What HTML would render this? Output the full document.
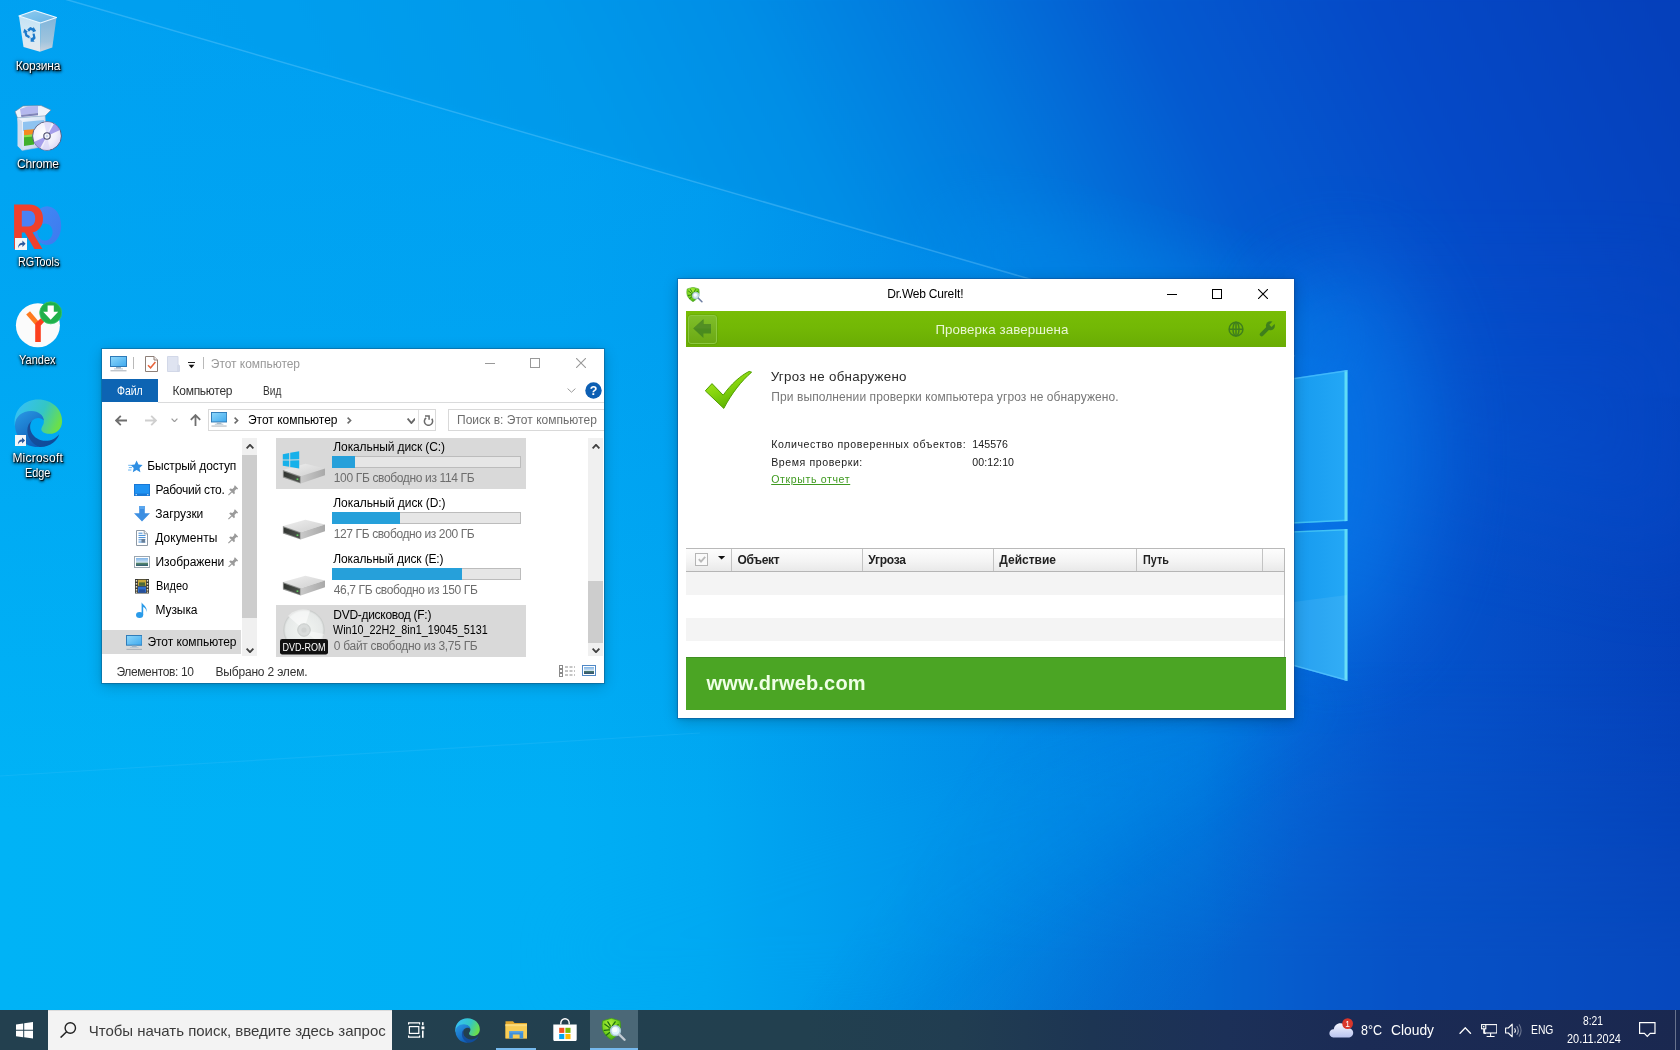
<!DOCTYPE html>
<html lang="ru"><head><meta charset="utf-8"><title>Desktop</title>
<style>
*{margin:0;padding:0;box-sizing:border-box}
html,body{width:1680px;height:1050px;overflow:hidden;background:#0a6bd2}
body{font-family:"Liberation Sans",sans-serif;position:relative;font-size:12px}
#root{position:absolute;left:0;top:0;width:1680px;height:1050px;overflow:hidden;opacity:.999}
.wall{position:absolute;left:0;top:0}
.a{position:absolute}
.t{position:absolute;white-space:nowrap}
svg{display:block}
.ds{text-shadow:1px 1px 1px rgba(0,0,0,.95),0 1px 3px rgba(0,0,0,.9),0 0 4px rgba(0,0,0,.65),1px 2px 3px rgba(0,0,0,.6)}
</style></head>
<body>
<div id="root">

<svg class="wall" width="1680" height="1050" viewBox="0 0 1680 1050">
<defs>
<linearGradient id="bg" x1="0" y1="0" x2="1680" y2="0" gradientUnits="userSpaceOnUse">
<stop offset="0" stop-color="#00b3f6"/><stop offset="0.333" stop-color="#00aff5"/><stop offset="0.42" stop-color="#00a9f2"/><stop offset="0.536" stop-color="#0097eb"/>
<stop offset="0.714" stop-color="#007de1"/><stop offset="0.774" stop-color="#0566d7"/><stop offset="0.833" stop-color="#0555cd"/>
<stop offset="1" stop-color="#0540b9"/>
</linearGradient>
<linearGradient id="vert" x1="0" y1="0" x2="0" y2="1050" gradientUnits="userSpaceOnUse">
<stop offset="0" stop-color="#0050dc" stop-opacity="0.18"/><stop offset="0.3" stop-color="#0050dc" stop-opacity="0.13"/>
<stop offset="0.78" stop-color="#0050dc" stop-opacity="0"/>
</linearGradient>
<linearGradient id="up" x1="0" y1="0" x2="1350" y2="-654" gradientUnits="userSpaceOnUse">
<stop offset="0" stop-color="#00a0f0"/><stop offset="0.165" stop-color="#009eee"/><stop offset="0.321" stop-color="#0099ea"/>
<stop offset="0.441" stop-color="#008ee6"/><stop offset="0.561" stop-color="#0278dd"/><stop offset="0.681" stop-color="#045ad0"/>
<stop offset="0.825" stop-color="#0549c7"/><stop offset="0.993" stop-color="#0540bb"/>
</linearGradient>
<linearGradient id="pane" x1="0" y1="0" x2="1" y2="0">
<stop offset="0" stop-color="#0a86e6"/><stop offset="0.7" stop-color="#189cf0"/><stop offset="1" stop-color="#24a8f6"/>
</linearGradient>
<linearGradient id="tilt" x1="800" y1="1000" x2="1071.6" y2="1187.4" gradientUnits="userSpaceOnUse">
<stop offset="0" stop-color="#0850c2" stop-opacity="0"/><stop offset="0.5" stop-color="#0850c2" stop-opacity="0.2"/>
<stop offset="0.8" stop-color="#0850c2" stop-opacity="0.4"/><stop offset="1.2" stop-color="#0850c2" stop-opacity="0.5"/>
</linearGradient>
<linearGradient id="vfade" x1="0" y1="660" x2="0" y2="960" gradientUnits="userSpaceOnUse">
<stop offset="0" stop-color="#000"/><stop offset="1" stop-color="#fff"/>
</linearGradient>
<mask id="vmask" maskUnits="userSpaceOnUse" x="0" y="640" width="1680" height="410"><rect x="0" y="640" width="1680" height="410" fill="url(#vfade)"/></mask>
<filter id="b3" color-interpolation-filters="sRGB" x="-5%" y="-5%" width="110%" height="110%"><feGaussianBlur stdDeviation="2.5"/></filter>
<filter id="b30" color-interpolation-filters="sRGB" x="-30%" y="-30%" width="160%" height="160%"><feGaussianBlur stdDeviation="30"/></filter>
<filter id="b60" color-interpolation-filters="sRGB" x="-50%" y="-50%" width="200%" height="200%"><feGaussianBlur stdDeviation="45"/></filter>
</defs>
<rect width="1680" height="1050" fill="url(#bg)"/>
<rect width="1680" height="1050" fill="url(#vert)"/>
<!-- upper region above the top ray -->
<polygon points="61,-4 1295,356 1700,400 1700,-4" fill="url(#up)" filter="url(#b3)"/>
<!-- soften lower boundary of upper region on the right of the logo -->
<polygon points="1300,300 1700,300 1700,560 1300,470" fill="url(#up)" filter="url(#b60)" opacity="0.8"/>
<!-- bright beam under the window -->
<rect x="0" y="640" width="1680" height="410" fill="url(#tilt)" mask="url(#vmask)"/>
<polygon points="1294,700 1350,690 900,980 560,1000 560,910" fill="#00a8f4" opacity="0.10" filter="url(#b30)"/>
<!-- glow around logo -->
<ellipse cx="1340" cy="455" rx="85" ry="190" fill="#0a84f4" opacity="0.55" filter="url(#b60)"/>
<ellipse cx="1130" cy="290" rx="210" ry="55" transform="rotate(16 1130 290)" fill="#0092f0" opacity="0.30" filter="url(#b30)"/>
<!-- top ray line -->
<line x1="61" y1="-2" x2="1295" y2="356" stroke="#8ad8ff" stroke-opacity="0.30" stroke-width="1.5"/>
<!-- faint mid ray -->
<line x1="0" y1="776" x2="700" y2="733" stroke="#5fd0ff" stroke-opacity="0.16" stroke-width="1.2"/>
<!-- logo panes -->
<polygon points="1200,392 1347,370 1347,521 1200,528" fill="url(#pane)"/>
<polygon points="1200,535 1347,529 1347,681 1200,640" fill="url(#pane)"/>
<polygon points="1344.5,370.4 1347.6,370 1347.6,521 1344.5,521.2" fill="#5fdcf8"/>
<polygon points="1344.5,529.2 1347.6,529 1347.6,681 1344.5,680.2" fill="#5fdcf8"/>
<polygon points="1200,392 1347,370 1347,371.6 1200,393.6" fill="#4fc0ff" opacity="0.7"/>
<polygon points="1200,638.4 1347,679.4 1347,681 1200,640" fill="#4fc0ff" opacity="0.7"/>
<polygon points="1200,526.4 1347,519.6 1347,521 1200,528" fill="#5fdcf8" opacity="0.55"/>
<polygon points="1200,535 1347,529 1347,530.4 1200,536.4" fill="#5fdcf8" opacity="0.55"/>
<polygon points="1200,614 1347,595 1347,681 1200,640" fill="#fff" opacity="0.07"/>
</svg>
<svg class="a" style="left:18px;top:9.5px;" width="39" height="43" viewBox="0 0 39 43"><defs><linearGradient id="g1" x1="0" y1="0" x2="0" y2="1"><stop offset="0" stop-color="#cfe6f4"/><stop offset="0.6" stop-color="#e4eef5"/><stop offset="1" stop-color="#f2ecec"/></linearGradient>
<linearGradient id="g2" x1="0" y1="0" x2="0" y2="1"><stop offset="0" stop-color="#86b6da"/><stop offset="0.7" stop-color="#a9c6dc"/><stop offset="1" stop-color="#d4d6de"/></linearGradient>
<linearGradient id="g3" x1="0" y1="0" x2="1" y2="1"><stop offset="0" stop-color="#9fd0ee"/><stop offset="1" stop-color="#6fb4e4"/></linearGradient></defs>
<polygon points="0.9,6 16.7,0.6 38.5,7.6 22.5,12.9" fill="url(#g3)" opacity="0.9"/>
<polygon points="0.9,6 22.5,12.9 22,41.7 5.5,36.9" fill="url(#g1)" opacity="0.95"/>
<polygon points="22.5,12.9 38.5,7.6 34.3,37.4 22,41.7" fill="url(#g2)" opacity="0.95"/>
<path d="M0.9 6L16.7 0.6L38.5 7.6L22.5 12.9Z" fill="none" stroke="#eef8ff" stroke-width="1.1" stroke-linejoin="round"/>
<g fill="#1c7acb" transform="translate(12.4,23.8) skewY(14) scale(0.78,0.9)"><g transform="rotate(10)"><path d="M-4.6,-3.2 L-1.6,-7.4 L2.4,-7.4 L2.4,-9.2 L6.4,-5.8 L2.4,-2.4 L2.4,-4.2 L-0.4,-4.2 L-2.2,-1.6 Z"/></g><g transform="rotate(130)"><path d="M-4.6,-3.2 L-1.6,-7.4 L2.4,-7.4 L2.4,-9.2 L6.4,-5.8 L2.4,-2.4 L2.4,-4.2 L-0.4,-4.2 L-2.2,-1.6 Z"/></g><g transform="rotate(250)"><path d="M-4.6,-3.2 L-1.6,-7.4 L2.4,-7.4 L2.4,-9.2 L6.4,-5.8 L2.4,-2.4 L2.4,-4.2 L-0.4,-4.2 L-2.2,-1.6 Z"/></g></g></svg>
<span class="t ds" style="left:15.80px;top:58px;font-size:12px;line-height:16px;color:#fff;letter-spacing:-0.198px;">Корзина</span>
<svg class="a" style="left:14px;top:105px;" width="48" height="47" viewBox="0 0 48 47"><defs><linearGradient id="g4" x1="0" y1="0" x2="1" y2="1"><stop offset="0" stop-color="#f4f8fd"/><stop offset="1" stop-color="#b9cfe8"/></linearGradient>
<radialGradient id="g5" cx="0.4" cy="0.4" r="0.7"><stop offset="0" stop-color="#ffffff"/><stop offset="0.6" stop-color="#f0eefb"/><stop offset="1" stop-color="#d6d2f2"/></radialGradient></defs>
<path d="M1 6.5L9 1L27 0.5L37 5L31 11L3.5 13Z" fill="#eef3fb" stroke="#6f7f9a" stroke-width="0.6"/>
<path d="M6 4L14 1.2L24 1L24 8L7 10Z" fill="#b4b8ee"/><path d="M7 10L24 8V10.2L7.4 12Z" fill="#7f84b8"/>
<path d="M3.5 13L31 11L33 41L8 45.5Z" fill="url(#g4)" stroke="#a9bcd6" stroke-width="0.6"/>
<path d="M3.5 13L8 16V45.5L3.5 41Z" fill="#cfdcee"/>
<path d="M9 17L30 15V24L9 26Z" fill="#8fc3f0"/>
<path d="M10 25L20 24.2V29.4L10 30.2Z" fill="#f58a1f"/><path d="M10 30.2L20 29.4V39.6L10 41Z" fill="#3fb02a"/><path d="M10 30.2L20 29.4V31.4L10 32.2Z" fill="#8fe04a"/>
<circle cx="33" cy="31" r="14.4" fill="url(#g5)" stroke="#3b3f66" stroke-opacity="0.75" stroke-width="1"/>
<path d="M33 31L40.2 18.53A14.4 14.4 0 0 1 46.05 24.91Z" fill="#968ee6" opacity="0.85"/><path d="M33 31L25.8 43.47A14.4 14.4 0 0 1 19.95 37.09Z" fill="#968ee6" opacity="0.85"/>
<path d="M33 31L30 17A14.4 14.4 0 0 1 38 17.6Z" fill="#d9d4f6" opacity="0.7"/><path d="M33 31L36 45A14.4 14.4 0 0 1 28 44.4Z" fill="#d9d4f6" opacity="0.7"/>
<circle cx="33" cy="31" r="3.2" fill="#f4f4fb" stroke="#4a4a6a" stroke-width="1.1"/><circle cx="33" cy="31" r="1.2" fill="#c9d6f0"/></svg>
<span class="t ds" style="left:17.00px;top:156px;font-size:12px;line-height:16px;color:#fff;letter-spacing:-0.138px;">Chrome</span>
<svg class="a" style="left:14px;top:204px;" width="48" height="46" viewBox="0 0 48 46"><defs><linearGradient id="g6" x1="0" y1="0" x2="1" y2="1"><stop offset="0" stop-color="#4a86f6"/><stop offset="1" stop-color="#4674ee"/></linearGradient></defs>
<path fill-rule="evenodd" d="M33 2.2C41 2.2 47.2 10.6 47.2 21.6C47.2 32.6 41 41 33 41C25 41 19 32.6 19 21.6C19 10.6 25 2.2 33 2.2ZM31 19.6C26.8 19.6 23.4 23.4 23.4 28C23.4 32.8 26.8 36.6 31 36.6C35.2 36.6 38.6 32.8 38.6 28C38.6 23.4 35.2 19.6 31 19.6Z" fill="url(#g6)" opacity="0.88"/>
<rect x="6" y="5" width="17" height="22" fill="#4a82f5"/>
<path fill-rule="evenodd" d="M0.1 0.4H15C24 0.4 29 6 29 14.5C29 22 25 27 18.6 28.4L28.5 45.1H20.4L10.8 28.6H7.8V45.1H0.1ZM7.8 6.8V22.4H14.5C19 22.4 21.2 19.4 21.2 14.6C21.2 9.8 19 6.8 14.5 6.8Z" fill="#f0402c"/></svg>
<svg class="a" style="left:14.5px;top:237.8px;" width="12" height="12" viewBox="0 0 12 12"><rect x="0" y="0" width="12" height="12" fill="#f4f6f8"/>
<path d="M3 10.2C3 6.6 5 4.8 7.4 4.8V2.6L10.6 5.8L7.4 9V6.8C5.6 6.8 4.2 7.8 3 10.2Z" fill="#2b5a9e"/></svg>
<span class="t ds" style="left:17.60px;top:254px;font-size:12px;line-height:16px;color:#fff;transform:scaleX(0.8997);transform-origin:0 0;">RGTools</span>
<svg class="a" style="left:15px;top:300.5px;" width="47" height="47" viewBox="0 0 47 47"><circle cx="22.9" cy="24.3" r="22" fill="#fbfbfb"/>
<path d="M20.4 24L11.2 13.4L15 10.2L23.4 20.2Z" fill="#ff7a1f"/>
<path d="M20.2 22.6L32 11.4L35 14.6L25.8 24.6V41H20.2Z" fill="#fc3f1d"/>
<circle cx="35.7" cy="11.8" r="11" fill="#1fb04a"/><circle cx="35.7" cy="11.8" r="11" fill="none" stroke="#38c768" stroke-width="0.8"/>
<path d="M32.6 4.6H38.8V10.8H43.2L35.7 18.8L28.2 10.8H32.6Z" fill="#fff"/></svg>
<span class="t ds" style="left:19.20px;top:352px;font-size:12px;line-height:16px;color:#fff;transform:scaleX(0.9172);transform-origin:0 0;">Yandex</span>
<svg class="a" style="left:14px;top:398.8px;" width="48.5" height="48.5" viewBox="0 0 48 48"><defs>
<linearGradient id="g7" x1="0.1" y1="0.2" x2="1" y2="0.5"><stop offset="0" stop-color="#35c1f1"/><stop offset="0.55" stop-color="#34c6c4"/><stop offset="1" stop-color="#6bdf4a"/></linearGradient>
<linearGradient id="g8" x1="0" y1="0" x2="0.6" y2="1"><stop offset="0" stop-color="#2a9be6"/><stop offset="1" stop-color="#0f5db8"/></linearGradient>
<linearGradient id="g9" x1="0" y1="0" x2="1" y2="1"><stop offset="0" stop-color="#1b4f9e"/><stop offset="1" stop-color="#0c4c9a"/></linearGradient>
</defs>
<path d="M24 0.5C38 0.5 48 10.5 47.6 22.5C47.4 29.5 42 34.5 35.5 34.5C29 34.5 26 31.5 27.4 28.4C28.6 25.8 30 24.6 29.4 21C28.6 16.6 24.6 13.6 19.6 13.8C11 14.2 3.6 20 1 27.4C-1.6 13 8.6 0.5 24 0.5Z" fill="url(#g7)"/>
<path d="M1 27.4C0.2 17.6 8 11.6 17.4 11.8C24.4 12 29.4 16 29.6 21.4C26.6 18 21.4 18 17.6 21.8C12.6 26.8 13.2 37.8 24.6 47.4C11.6 48 2.2 39 1 27.4Z" fill="url(#g8)"/>
<path d="M17.6 21.8C14.4 27 15.8 34.4 22.6 38.8C29.8 43.4 39.6 41.6 44.6 34.8C43.6 40.6 35 48.4 24.6 47.4C10.6 40.6 11 26 17.6 21.8Z" fill="url(#g9)"/></svg>
<svg class="a" style="left:14.8px;top:434.8px;" width="11.4" height="11.4" viewBox="0 0 12 12"><rect x="0" y="0" width="12" height="12" fill="#f4f6f8"/>
<path d="M3 10.2C3 6.6 5 4.8 7.4 4.8V2.6L10.6 5.8L7.4 9V6.8C5.6 6.8 4.2 7.8 3 10.2Z" fill="#2b5a9e"/></svg>
<span class="t ds" style="left:12.40px;top:450px;font-size:12px;line-height:16px;color:#fff;letter-spacing:0.229px;">Microsoft</span>
<span class="t ds" style="left:24.60px;top:465px;font-size:12px;line-height:16px;color:#fff;transform:scaleX(0.9066);transform-origin:0 0;">Edge</span>
<div class="a" style="left:102px;top:349px;width:502px;height:334px;background:#fff;box-shadow:0 0 0 1px rgba(20,80,125,.42),0 3px 14px rgba(0,0,0,.20),0 1px 4px rgba(0,0,0,.14);"></div>
<svg class="a" style="left:109.5px;top:355.5px;" width="17.0" height="16.0" viewBox="0 0 17 16"><defs><linearGradient id="g10" x1="0" y1="0" x2="1" y2="1"><stop offset="0" stop-color="#8fd8fb"/><stop offset="1" stop-color="#3fa9ee"/></linearGradient></defs>
<rect x="0.5" y="0.5" width="16" height="10" fill="url(#g10)" stroke="#2d7ab8" stroke-width="1"/>
<rect x="6" y="11" width="5" height="1.6" fill="#9fb4c4"/>
<rect x="4" y="12.4" width="9" height="1" fill="#b8c6d2"/>
<rect x="0.5" y="14.3" width="16" height="1" fill="#a5adb5"/></svg>
<div class="a" style="left:133px;top:357px;width:1px;height:12px;background:#b9b9b9;"></div>
<svg class="a" style="left:145px;top:356px;" width="13" height="16" viewBox="0 0 13 16"><path d="M0.5 0.5H9L12.5 4V15.5H0.5Z" fill="#fff" stroke="#8d7f78"/>
<path d="M9 0.5V4H12.5" fill="#f1ece9" stroke="#8d7f78"/>
<path d="M3 9.2L5.6 11.8L10.4 6" fill="none" stroke="#e8633a" stroke-width="1.5"/></svg>
<svg class="a" style="left:167px;top:356px;" width="13" height="16" viewBox="0 0 13 16"><path d="M0.5 0.5H11V8.5L12.5 9.5V15.5H0.5Z" fill="#dfe4f1" stroke="#d2d8e8"/>
<path d="M11 9V15.5" stroke="#c9d0e2" stroke-width="1"/></svg>
<svg class="a" style="left:188px;top:361.5px;" width="7" height="7" viewBox="0 0 7 7"><rect x="0" y="0" width="7" height="1" fill="#222"/><path d="M0.6 2.8H6.4L3.5 6.2Z" fill="#111"/></svg>
<div class="a" style="left:203px;top:357px;width:1px;height:12px;background:#b9b9b9;"></div>
<span class="t" style="left:210.80px;top:356px;font-size:12px;line-height:16px;color:#999;letter-spacing:-0.040px;">Этот компьютер</span>
<svg class="a" style="left:485px;top:363px;" width="10" height="1" viewBox="0 0 10 1"><rect width="10" height="1" fill="#999"/></svg>
<svg class="a" style="left:530px;top:358px;" width="10" height="10" viewBox="0 0 10 10"><rect x="0.5" y="0.5" width="9" height="9" fill="none" stroke="#999"/></svg>
<svg class="a" style="left:576px;top:358px;" width="10" height="10" viewBox="0 0 10 10"><path d="M0 0L10 10M10 0L0 10" stroke="#999" stroke-width="1.1"/></svg>
<div class="a" style="left:102px;top:379px;width:56px;height:23px;background:#0d64b3;"></div>
<span class="t" style="left:116.80px;top:383px;font-size:12px;line-height:16px;color:#fff;transform:scaleX(0.8712);transform-origin:0 0;">Файл</span>
<span class="t" style="left:172.50px;top:383px;font-size:12px;line-height:16px;color:#333;letter-spacing:-0.262px;">Компьютер</span>
<span class="t" style="left:262.50px;top:383px;font-size:12px;line-height:16px;color:#333;transform:scaleX(0.8432);transform-origin:0 0;">Вид</span>
<div class="a" style="left:158px;top:402px;width:446px;height:1px;background:#dadbdc;"></div>
<svg class="a" style="left:567px;top:387.6px;" width="9" height="5" viewBox="0 0 9 5"><path d="M0.6 0.6L4.5 4.2L8.4 0.6" fill="none" stroke="#9a9a9a" stroke-width="1.0"/></svg>
<svg class="a" style="left:584.5px;top:381.5px;" width="17" height="17" viewBox="0 0 17 17"><circle cx="8.5" cy="8.5" r="8.2" fill="#0d5fb3"/>
<text x="8.5" y="13" font-family="Liberation Sans" font-weight="700" font-size="12.5" fill="#fff" text-anchor="middle">?</text></svg>
<svg class="a" style="left:115px;top:414.5px;" width="12" height="11" viewBox="0 0 12 11"><path d="M12 5.5H1.2M5.8 0.8L1.1 5.5L5.8 10.2" fill="none" stroke="#6e6e6e" stroke-width="1.8"/></svg>
<svg class="a" style="left:145px;top:414.5px;" width="12" height="11" viewBox="0 0 12 11"><path d="M0 5.5H10.8M6.2 0.8L10.9 5.5L6.2 10.2" fill="none" stroke="#cfcfcf" stroke-width="1.8"/></svg>
<svg class="a" style="left:171px;top:417.5px;" width="7" height="4.5" viewBox="0 0 7 4.5"><path d="M0.6 0.6L3.5 3.7L6.4 0.6" fill="none" stroke="#9a9a9a" stroke-width="1.2"/></svg>
<svg class="a" style="left:189.5px;top:414px;" width="11" height="12" viewBox="0 0 11 12"><path d="M5.5 12V1.2M0.8 5.8L5.5 1.1L10.2 5.8" fill="none" stroke="#6f6f6f" stroke-width="1.8"/></svg>
<div class="a" style="left:208px;top:409px;width:228px;height:22px;background:#fff;border:1px solid #d9d9d9;"></div>
<svg class="a" style="left:211.2px;top:411.8px;" width="16.15" height="15.2" viewBox="0 0 17 16"><defs><linearGradient id="g11" x1="0" y1="0" x2="1" y2="1"><stop offset="0" stop-color="#8fd8fb"/><stop offset="1" stop-color="#3fa9ee"/></linearGradient></defs>
<rect x="0.5" y="0.5" width="16" height="10" fill="url(#g11)" stroke="#2d7ab8" stroke-width="1"/>
<rect x="6" y="11" width="5" height="1.6" fill="#9fb4c4"/>
<rect x="4" y="12.4" width="9" height="1" fill="#b8c6d2"/>
<rect x="0.5" y="14.3" width="16" height="1" fill="#a5adb5"/></svg>
<svg class="a" style="left:234.3px;top:417px;" width="4.4" height="7" viewBox="0 0 4.4 7"><path d="M0.6 0.6L3.6000000000000005 3.5L0.6 6.4" fill="none" stroke="#6a6a6a" stroke-width="1.6"/></svg>
<span class="t" style="left:248.00px;top:412px;font-size:12px;line-height:16px;color:#000;letter-spacing:-0.017px;">Этот компьютер</span>
<svg class="a" style="left:347.4px;top:417px;" width="4.4" height="7" viewBox="0 0 4.4 7"><path d="M0.6 0.6L3.6000000000000005 3.5L0.6 6.4" fill="none" stroke="#6a6a6a" stroke-width="1.6"/></svg>
<svg class="a" style="left:406.6px;top:418px;" width="8.8" height="5.8" viewBox="0 0 8.8 5.8"><path d="M0.6 0.6L4.4 5.0L8.200000000000001 0.6" fill="none" stroke="#666" stroke-width="1.9"/></svg>
<div class="a" style="left:418px;top:410px;width:1px;height:20px;background:#e1e1e1;"></div>
<svg class="a" style="left:422.5px;top:414px;" width="11" height="12" viewBox="0 0 11 12"><path d="M8.77 4.73A4.1 4.1 0 1 1 3.15 3.84" fill="none" stroke="#6a6a6a" stroke-width="1.5"/>
<path d="M2.0 1.9H6.1V5.7" fill="none" stroke="#6a6a6a" stroke-width="1.5"/></svg>
<div class="a" style="left:448px;top:409px;width:156px;height:22px;background:#fff;border:1px solid #d9d9d9;border-right:none;"></div>
<span class="t" style="left:457.00px;top:412px;font-size:12px;line-height:16px;color:#6d6d6d;letter-spacing:0.021px;">Поиск в: Этот компьютер</span>
<svg class="a" style="left:128px;top:459.6px;" width="15" height="13" viewBox="0 0 15 13"><path d="M8.6 0.4L10.5 4.6L14.6 5.1L11.5 7.9L12.4 12.2L8.6 10L4.8 12.2L5.7 7.9L2.6 5.1L6.7 4.6Z" fill="#2f8fe3"/>
<path d="M0.2 5.3H3.2M0.8 7.6H4M0 10H3.4" stroke="#5aaef0" stroke-width="0.9"/></svg>
<span class="t" style="left:147.30px;top:458px;font-size:12px;line-height:16px;color:#000;letter-spacing:-0.165px;">Быстрый доступ</span>
<svg class="a" style="left:134px;top:484px;" width="16" height="12" viewBox="0 0 16 12"><rect x="0" y="0" width="16" height="12" fill="#1878d6"/>
<rect x="1" y="1" width="14" height="8.5" fill="#1f93f3"/>
<rect x="1.6" y="10.2" width="1.2" height="1" fill="#fff"/><rect x="13.2" y="10.2" width="1.2" height="1" fill="#fff"/></svg>
<span class="t" style="left:155.40px;top:482px;font-size:12px;line-height:16px;color:#000;letter-spacing:-0.228px;">Рабочий сто.</span>
<svg class="a" style="left:227.5px;top:485px;" width="10.5" height="10.5" viewBox="0 0 10.5 10.5"><path d="M6.9 0.3L10.2 3.6L9.2 4.4L8.4 4.1L6.5 6L6.9 8.3L5.9 9.3L1.2 4.6L2.2 3.6L4.5 4L6.4 2.1L6.1 1.3Z" fill="#9a9a9a"/>
<path d="M3.7 6.8L0.4 10.1" stroke="#9a9a9a" stroke-width="1.2"/></svg>
<svg class="a" style="left:134px;top:506.3px;" width="16" height="16" viewBox="0 0 16 16"><path d="M5.2 0H10.8V7.2H16L8 15.4L0 7.2H5.2Z" fill="#3d8fe2"/><path d="M5.2 0H10.8V3H5.2Z" fill="#5aa6ee"/></svg>
<span class="t" style="left:155.30px;top:506px;font-size:12px;line-height:16px;color:#000;letter-spacing:-0.040px;">Загрузки</span>
<svg class="a" style="left:227.5px;top:509px;" width="10.5" height="10.5" viewBox="0 0 10.5 10.5"><path d="M6.9 0.3L10.2 3.6L9.2 4.4L8.4 4.1L6.5 6L6.9 8.3L5.9 9.3L1.2 4.6L2.2 3.6L4.5 4L6.4 2.1L6.1 1.3Z" fill="#9a9a9a"/>
<path d="M3.7 6.8L0.4 10.1" stroke="#9a9a9a" stroke-width="1.2"/></svg>
<svg class="a" style="left:136px;top:529.8px;" width="12" height="16" viewBox="0 0 12 16"><path d="M0.5 0.5H8.2L11.5 3.8V15.5H0.5Z" fill="#fff" stroke="#8f9aa6"/>
<path d="M8.2 0.5V3.8H11.5" fill="#eef1f4" stroke="#8f9aa6"/>
<path d="M2.5 3.2H6.5M2.5 5.4H9.5M2.5 7.6H9.5M2.5 9.8H9.5M2.5 12H9.5" stroke="#3f8bd6" stroke-width="1"/>
<rect x="5.5" y="9" width="3.5" height="3.6" fill="#6a7f96"/></svg>
<span class="t" style="left:155.20px;top:530px;font-size:12px;line-height:16px;color:#000;letter-spacing:0.043px;">Документы</span>
<svg class="a" style="left:227.5px;top:533px;" width="10.5" height="10.5" viewBox="0 0 10.5 10.5"><path d="M6.9 0.3L10.2 3.6L9.2 4.4L8.4 4.1L6.5 6L6.9 8.3L5.9 9.3L1.2 4.6L2.2 3.6L4.5 4L6.4 2.1L6.1 1.3Z" fill="#9a9a9a"/>
<path d="M3.7 6.8L0.4 10.1" stroke="#9a9a9a" stroke-width="1.2"/></svg>
<svg class="a" style="left:134px;top:555.8px;" width="16" height="12" viewBox="0 0 16 12"><defs><linearGradient id="g12" x1="0" y1="0" x2="0" y2="1"><stop offset="0" stop-color="#7fb4e8"/><stop offset="0.55" stop-color="#cfe3f2"/><stop offset="0.6" stop-color="#5e8f6a"/><stop offset="1" stop-color="#2f5b74"/></linearGradient></defs>
<rect x="0.5" y="0.5" width="15" height="11" fill="#fff" stroke="#9aa6b0"/>
<rect x="2" y="2" width="12" height="8" fill="url(#g12)"/></svg>
<span class="t" style="left:155.50px;top:554px;font-size:12px;line-height:16px;color:#000;letter-spacing:-0.012px;">Изображени</span>
<svg class="a" style="left:227.5px;top:556.8px;" width="10.5" height="10.5" viewBox="0 0 10.5 10.5"><path d="M6.9 0.3L10.2 3.6L9.2 4.4L8.4 4.1L6.5 6L6.9 8.3L5.9 9.3L1.2 4.6L2.2 3.6L4.5 4L6.4 2.1L6.1 1.3Z" fill="#9a9a9a"/>
<path d="M3.7 6.8L0.4 10.1" stroke="#9a9a9a" stroke-width="1.2"/></svg>
<svg class="a" style="left:135px;top:579px;" width="14" height="15" viewBox="0 0 14 15"><rect x="0" y="0" width="14" height="14.5" fill="#3b3b36"/>
<rect x="3" y="0.8" width="8" height="6" fill="#c9a83a"/><rect x="3" y="7.6" width="8" height="6" fill="#2f6fd0"/>
<rect x="4" y="3.4" width="6" height="3.4" fill="#4b6a3a"/><rect x="4" y="10.4" width="6" height="3" fill="#274f9a"/>
<g fill="#e9e2c4"><rect x="0.8" y="1" width="1.4" height="1.6"/><rect x="0.8" y="4" width="1.4" height="1.6"/><rect x="0.8" y="7" width="1.4" height="1.6"/><rect x="0.8" y="10" width="1.4" height="1.6"/><rect x="0.8" y="12.6" width="1.4" height="1.2"/>
<rect x="11.8" y="1" width="1.4" height="1.6"/><rect x="11.8" y="4" width="1.4" height="1.6"/><rect x="11.8" y="7" width="1.4" height="1.6"/><rect x="11.8" y="10" width="1.4" height="1.6"/><rect x="11.8" y="12.6" width="1.4" height="1.2"/></g></svg>
<span class="t" style="left:155.50px;top:578px;font-size:12px;line-height:16px;color:#000;transform:scaleX(0.9159);transform-origin:0 0;">Видео</span>
<svg class="a" style="left:135.6px;top:602px;" width="12" height="16" viewBox="0 0 12 16"><ellipse cx="3.6" cy="13" rx="3.6" ry="2.9" fill="#2a9be9"/>
<path d="M5.6 13V0.2C6.6 2.6 11.6 4.4 10.6 10.2C10.4 6.6 8.4 5.6 7.2 5V13Z" fill="#2a9be9"/></svg>
<span class="t" style="left:155.50px;top:602px;font-size:12px;line-height:16px;color:#000;letter-spacing:-0.091px;">Музыка</span>
<div class="a" style="left:102px;top:630px;width:139px;height:24px;background:#d9d9d9;"></div>
<svg class="a" style="left:125.6px;top:634.6px;" width="16.49" height="15.52" viewBox="0 0 17 16"><defs><linearGradient id="g13" x1="0" y1="0" x2="1" y2="1"><stop offset="0" stop-color="#8fd8fb"/><stop offset="1" stop-color="#3fa9ee"/></linearGradient></defs>
<rect x="0.5" y="0.5" width="16" height="10" fill="url(#g13)" stroke="#2d7ab8" stroke-width="1"/>
<rect x="6" y="11" width="5" height="1.6" fill="#9fb4c4"/>
<rect x="4" y="12.4" width="9" height="1" fill="#b8c6d2"/>
<rect x="0.5" y="14.3" width="16" height="1" fill="#a5adb5"/></svg>
<span class="t" style="left:147.40px;top:634px;font-size:12px;line-height:16px;color:#000;letter-spacing:-0.048px;">Этот компьютер</span>
<div class="a" style="left:242px;top:438px;width:15px;height:218px;background:#f0f0f0;"></div>
<div class="a" style="left:242px;top:455px;width:15px;height:163px;background:#cdcdcd;"></div>
<svg class="a" style="left:245.5px;top:444px;" width="8" height="5" viewBox="0 0 8 5"><path d="M0.6 4.4L4.0 0.8L7.4 4.4" fill="none" stroke="#404040" stroke-width="1.8"/></svg>
<svg class="a" style="left:245.5px;top:647.5px;" width="8" height="5" viewBox="0 0 8 5"><path d="M0.6 0.6L4.0 4.2L7.4 0.6" fill="none" stroke="#404040" stroke-width="1.8"/></svg>
<div class="a" style="left:276px;top:438px;width:250px;height:51px;background:#d9d9d9;"></div>
<svg class="a" style="left:282px;top:450px;" width="44" height="35" viewBox="0 0 44 35"><defs>
<linearGradient id="g14" x1="0" y1="0" x2="1" y2="1"><stop offset="0" stop-color="#efefef"/><stop offset="1" stop-color="#cfcfcf"/></linearGradient>
<linearGradient id="g15" x1="0" y1="0" x2="1" y2="0"><stop offset="0" stop-color="#c9c9c9"/><stop offset="1" stop-color="#a9a9a9"/></linearGradient>
<linearGradient id="g16" x1="0" y1="0" x2="1" y2="0.4"><stop offset="0" stop-color="#2f322f"/><stop offset="1" stop-color="#4c504b"/></linearGradient>
</defs>
<polygon points="0.9,20.1 23.4,13.8 43,18.5 18.7,26.3" fill="url(#g14)"/>
<polygon points="18.7,26.3 43,18.5 43,25.3 18.7,33.6" fill="url(#g15)"/>
<polygon points="0.9,20.1 18.7,26.3 18.7,33.6 0.9,27.4" fill="#8d8f8d"/>
<polygon points="1.8,21.4 17.8,27 17.8,32.4 1.8,26.6" fill="url(#g16)"/>
<rect x="14.6" y="28.4" width="1.7" height="1.6" fill="#5fd35f"/><g fill="#17b1ea">
<polygon points="0.8,4.2 7.2,3.0 7.2,9.4 0.8,9.6"/><polygon points="8.2,2.8 17.2,1.2 17.2,9.2 8.2,9.4"/>
<polygon points="0.8,10.6 7.2,10.4 7.2,16.8 0.8,15.8"/><polygon points="8.2,10.4 17.2,10.2 17.2,18.4 8.2,17"/></g></svg>
<span class="t" style="left:333.30px;top:439px;font-size:12px;line-height:16px;color:#000;letter-spacing:-0.103px;">Локальный диск (C:)</span>
<div class="a" style="left:332px;top:456px;width:189px;height:12px;background:#e6e6e6;border:1px solid #bcbcbc;"></div>
<div class="a" style="left:332px;top:456px;width:23px;height:12px;background:#26a0da;"></div>
<span class="t" style="left:333.80px;top:470px;font-size:12px;line-height:16px;color:#6d6d6d;letter-spacing:-0.351px;">100 ГБ свободно из 114 ГБ</span>
<svg class="a" style="left:282px;top:506px;" width="44" height="35" viewBox="0 0 44 35"><defs>
<linearGradient id="g17" x1="0" y1="0" x2="1" y2="1"><stop offset="0" stop-color="#efefef"/><stop offset="1" stop-color="#cfcfcf"/></linearGradient>
<linearGradient id="g18" x1="0" y1="0" x2="1" y2="0"><stop offset="0" stop-color="#c9c9c9"/><stop offset="1" stop-color="#a9a9a9"/></linearGradient>
<linearGradient id="g19" x1="0" y1="0" x2="1" y2="0.4"><stop offset="0" stop-color="#2f322f"/><stop offset="1" stop-color="#4c504b"/></linearGradient>
</defs>
<polygon points="0.9,20.1 23.4,13.8 43,18.5 18.7,26.3" fill="url(#g17)"/>
<polygon points="18.7,26.3 43,18.5 43,25.3 18.7,33.6" fill="url(#g18)"/>
<polygon points="0.9,20.1 18.7,26.3 18.7,33.6 0.9,27.4" fill="#8d8f8d"/>
<polygon points="1.8,21.4 17.8,27 17.8,32.4 1.8,26.6" fill="url(#g19)"/>
<rect x="14.6" y="28.4" width="1.7" height="1.6" fill="#5fd35f"/></svg>
<span class="t" style="left:333.30px;top:495px;font-size:12px;line-height:16px;color:#000;letter-spacing:-0.075px;">Локальный диск (D:)</span>
<div class="a" style="left:332px;top:512px;width:189px;height:12px;background:#e6e6e6;border:1px solid #bcbcbc;"></div>
<div class="a" style="left:332px;top:512px;width:68px;height:12px;background:#26a0da;"></div>
<span class="t" style="left:333.80px;top:526px;font-size:12px;line-height:16px;color:#6d6d6d;letter-spacing:-0.388px;">127 ГБ свободно из 200 ГБ</span>
<svg class="a" style="left:282px;top:562px;" width="44" height="35" viewBox="0 0 44 35"><defs>
<linearGradient id="g20" x1="0" y1="0" x2="1" y2="1"><stop offset="0" stop-color="#efefef"/><stop offset="1" stop-color="#cfcfcf"/></linearGradient>
<linearGradient id="g21" x1="0" y1="0" x2="1" y2="0"><stop offset="0" stop-color="#c9c9c9"/><stop offset="1" stop-color="#a9a9a9"/></linearGradient>
<linearGradient id="g22" x1="0" y1="0" x2="1" y2="0.4"><stop offset="0" stop-color="#2f322f"/><stop offset="1" stop-color="#4c504b"/></linearGradient>
</defs>
<polygon points="0.9,20.1 23.4,13.8 43,18.5 18.7,26.3" fill="url(#g20)"/>
<polygon points="18.7,26.3 43,18.5 43,25.3 18.7,33.6" fill="url(#g21)"/>
<polygon points="0.9,20.1 18.7,26.3 18.7,33.6 0.9,27.4" fill="#8d8f8d"/>
<polygon points="1.8,21.4 17.8,27 17.8,32.4 1.8,26.6" fill="url(#g22)"/>
<rect x="14.6" y="28.4" width="1.7" height="1.6" fill="#5fd35f"/></svg>
<span class="t" style="left:333.30px;top:551px;font-size:12px;line-height:16px;color:#000;letter-spacing:-0.149px;">Локальный диск (E:)</span>
<div class="a" style="left:332px;top:568px;width:189px;height:12px;background:#e6e6e6;border:1px solid #bcbcbc;"></div>
<div class="a" style="left:332px;top:568px;width:130px;height:12px;background:#26a0da;"></div>
<span class="t" style="left:333.80px;top:582px;font-size:12px;line-height:16px;color:#6d6d6d;letter-spacing:-0.378px;">46,7 ГБ свободно из 150 ГБ</span>
<div class="a" style="left:276px;top:605px;width:250px;height:52px;background:#d9d9d9;"></div>
<svg class="a" style="left:280px;top:608px;" width="48" height="47" viewBox="0 0 48 47"><defs><radialGradient id="g23" cx="0.5" cy="0.5" r="0.5"><stop offset="0" stop-color="#dcdcdc"/><stop offset="0.28" stop-color="#d4d8d6"/><stop offset="0.3" stop-color="#eef1ef"/><stop offset="0.9" stop-color="#e6e9e8"/><stop offset="1" stop-color="#cfd2d1"/></radialGradient></defs>
<circle cx="24" cy="22" r="20.3" fill="url(#g23)" stroke="#c4c7c6" stroke-width="0.6"/>
<path d="M24 22L8 8A20.3 20.3 0 0 1 30 2.6Z" fill="#fff" opacity="0.55"/>
<path d="M24 22L40 36A20.3 20.3 0 0 0 44 26Z" fill="#fff" opacity="0.45"/>
<circle cx="24" cy="22" r="6.3" fill="#d9dcdb" stroke="#c2c5c4" stroke-width="0.8"/>
<circle cx="24" cy="22" r="2.6" fill="#cfd2d1"/>
<rect x="0" y="31" width="48" height="15.5" rx="2.2" fill="#111"/>
<text x="24" y="43" font-family="Liberation Sans" font-size="10.6" fill="#fff" text-anchor="middle" textLength="43" lengthAdjust="spacingAndGlyphs">DVD-ROM</text></svg>
<span class="t" style="left:333.30px;top:607px;font-size:12px;line-height:16px;color:#000;letter-spacing:-0.290px;">DVD-дисковод (F:)</span>
<span class="t" style="left:333.30px;top:622px;font-size:12px;line-height:16px;color:#000;transform:scaleX(0.8988);transform-origin:0 0;">Win10_22H2_8in1_19045_5131</span>
<span class="t" style="left:333.80px;top:638px;font-size:12px;line-height:16px;color:#6d6d6d;letter-spacing:-0.292px;">0 байт свободно из 3,75 ГБ</span>
<div class="a" style="left:588px;top:438px;width:15px;height:218px;background:#f0f0f0;"></div>
<div class="a" style="left:588px;top:581px;width:15px;height:62px;background:#cdcdcd;"></div>
<svg class="a" style="left:591.5px;top:444px;" width="8" height="5" viewBox="0 0 8 5"><path d="M0.6 4.4L4.0 0.8L7.4 4.4" fill="none" stroke="#404040" stroke-width="1.8"/></svg>
<svg class="a" style="left:591.5px;top:647.5px;" width="8" height="5" viewBox="0 0 8 5"><path d="M0.6 0.6L4.0 4.2L7.4 0.6" fill="none" stroke="#404040" stroke-width="1.8"/></svg>
<span class="t" style="left:116.40px;top:664px;font-size:12px;line-height:16px;color:#333;letter-spacing:-0.355px;">Элементов: 10</span>
<span class="t" style="left:215.50px;top:664px;font-size:12px;line-height:16px;color:#333;letter-spacing:-0.184px;">Выбрано 2 элем.</span>
<svg class="a" style="left:559px;top:664.5px;" width="16" height="12" viewBox="0 0 16 12"><g fill="none" stroke="#8a8a8a" stroke-width="1"><rect x="0.5" y="0.5" width="3" height="3"/><rect x="0.5" y="4.5" width="3" height="3"/><rect x="0.5" y="8.5" width="3" height="3"/></g>
<g stroke="#8a8a8a" stroke-width="1" stroke-dasharray="3 1.5"><path d="M6 2H16M6 6H16M6 10H16"/></g></svg>
<svg class="a" style="left:582px;top:665px;" width="14" height="11" viewBox="0 0 14 11"><defs><linearGradient id="g24" x1="0" y1="0" x2="0" y2="1"><stop offset="0" stop-color="#7fb4e8"/><stop offset="0.5" stop-color="#cfe3f2"/><stop offset="0.55" stop-color="#4f7f6a"/><stop offset="1" stop-color="#2f4f74"/></linearGradient></defs>
<rect x="0.5" y="0.5" width="13" height="10" fill="#fff" stroke="#4f88c6"/><rect x="2" y="2" width="10" height="7" fill="url(#g24)"/></svg>
<div class="a" style="left:678px;top:279px;width:616px;height:439px;background:#fff;box-shadow:0 0 0 1px rgba(20,70,140,.4),0 3px 14px rgba(0,0,0,.22),0 1px 4px rgba(0,0,0,.15);"></div>
<svg class="a" style="left:685.5px;top:287px;" width="17.0" height="16.0" viewBox="0 0 17 16"><defs><radialGradient id="g25" cx="0.42" cy="0.3" r="0.8"><stop offset="0" stop-color="#b4f53e"/><stop offset="0.55" stop-color="#72d01c"/><stop offset="1" stop-color="#36a012"/></radialGradient></defs>
<path d="M7 0.2L12.8 1.9C13.9 6.4 13.2 11 7 14.7C0.8 11 0.1 6.4 1.2 1.9Z" fill="url(#g25)" stroke="#3f9a16" stroke-width="0.5" stroke-linejoin="round"/>
<g stroke="#1f6f12" stroke-width="0.9" fill="none" stroke-linecap="round"><path d="M2.6 4.2L5.4 6.2M2.2 8.4L5.2 8M3.6 11.6L5.8 9.8M9.6 2.6L7.8 5.2M4.6 2.6L6.2 5.2M11.6 4.6L9 6.2"/></g>
<circle cx="6.8" cy="7.2" r="1.7" fill="#2a8014" opacity="0.8"/>
<circle cx="9.8" cy="8.6" r="3.3" fill="#cfe4ea" stroke="#a9c9d6" stroke-width="1"/>
<circle cx="9.3" cy="8" r="1.7" fill="#fff" opacity="0.85"/>
<path d="M12.4 11.2L15.9 14.7" stroke="#6f7fa4" stroke-width="1.6" stroke-linecap="round"/></svg>
<span class="t" style="left:887.30px;top:286px;font-size:12px;line-height:16px;color:#000;letter-spacing:-0.225px;">Dr.Web CureIt!</span>
<svg class="a" style="left:1167px;top:294px;" width="10" height="1" viewBox="0 0 10 1"><rect width="10" height="1" fill="#000"/></svg>
<svg class="a" style="left:1212px;top:289px;" width="10" height="10" viewBox="0 0 10 10"><rect x="0.5" y="0.5" width="9" height="9" fill="none" stroke="#000"/></svg>
<svg class="a" style="left:1258px;top:289px;" width="10" height="10" viewBox="0 0 10 10"><path d="M0 0L10 10M10 0L0 10" stroke="#000" stroke-width="1.1"/></svg>
<div class="a" style="left:686px;top:311px;width:600px;height:36px;background:linear-gradient(#78bd06,#73b805 45%,#69ac04);"></div>
<div class="a" style="left:688px;top:315px;width:28.5px;height:28.5px;background:linear-gradient(#7fbe2a,#6ba913);border:1px solid #8cc840;border-radius:3px;box-shadow:0 0 0 0.5px rgba(60,120,10,.35);"></div>
<svg class="a" style="left:692.5px;top:318.8px;" width="18.5" height="19.2" viewBox="0 0 18.5 19.2"><path d="M0.3 9.6L10.4 0.2V5.2H18.2V14.4H10.4V19Z" fill="#4a8b1e"/><path d="M0.3 9.6L10.4 0.2V5.2H18.2V9.6Z" fill="#528f24"/></svg>
<span class="t" style="left:935.40px;top:321px;font-size:13.33px;line-height:17px;color:#e9f6d4;letter-spacing:0.084px;">Проверка завершена</span>
<svg class="a" style="left:1227.5px;top:320.5px;" width="16" height="16.4" viewBox="0 0 16 16.4"><g fill="none" stroke="#3f7f1c" stroke-width="1.5"><circle cx="8" cy="8.2" r="6.9"/><ellipse cx="8" cy="8.2" rx="3" ry="6.9"/><path d="M1.1 8.2H14.9M8 1.3V15.1"/></g></svg>
<svg class="a" style="left:1258.5px;top:320.5px;" width="17" height="16" viewBox="0 0 17 16"><line x1="2.7" y1="13.4" x2="10.5" y2="5.6" stroke="#3f7f1c" stroke-width="3.9" stroke-linecap="round"/><circle cx="11.4" cy="4.8" r="4.5" fill="#3f7f1c"/><polygon points="12.5,5.9 10.3,3.7 14.8,-0.8 17,1.4" fill="#74b905"/></svg>
<svg class="a" style="left:703.5px;top:369.5px;" width="49" height="40" viewBox="0 0 49 40"><defs><linearGradient id="g26" x1="0" y1="0" x2="0.6" y2="1"><stop offset="0" stop-color="#b4ec2a"/><stop offset="0.5" stop-color="#88d60e"/><stop offset="1" stop-color="#55ad00"/></linearGradient></defs>
<path d="M1.3 20.8L8 13.6L19.2 25.2C26.5 14.6 37 5.2 45.2 1.4L47.6 2.2C37.5 10.8 27.2 24 19.8 38.4Z" fill="url(#g26)" stroke="#4f9e00" stroke-width="1" stroke-linejoin="round"/></svg>
<span class="t" style="left:770.70px;top:368px;font-size:13.33px;line-height:17px;color:#2a2a2a;letter-spacing:0.286px;">Угроз не обнаружено</span>
<span class="t" style="left:771.20px;top:389px;font-size:12px;line-height:16px;color:#777;letter-spacing:0.101px;">При выполнении проверки компьютера угроз не обнаружено.</span>
<span class="t" style="left:771.20px;top:437px;font-size:10.6px;line-height:14px;color:#1a1a1a;letter-spacing:0.593px;">Количество проверенных объектов:</span>
<span class="t" style="left:972.20px;top:437px;font-size:10.6px;line-height:14px;color:#1a1a1a;letter-spacing:0.091px;">145576</span>
<span class="t" style="left:771.20px;top:455px;font-size:10.6px;line-height:14px;color:#1a1a1a;letter-spacing:0.572px;">Время проверки:</span>
<span class="t" style="left:972.20px;top:455px;font-size:10.6px;line-height:14px;color:#1a1a1a;letter-spacing:0.083px;">00:12:10</span>
<span class="t" style="left:771.20px;top:472px;font-size:10.6px;line-height:14px;color:#3f9a20;letter-spacing:0.619px;text-decoration:underline;">Открыть отчет</span>
<div class="a" style="left:686px;top:548px;width:599px;height:109px;background:#fff;border-top:1px solid #b9b9b9;border-right:1px solid #b9b9b9;"></div>
<div class="a" style="left:686px;top:549px;width:598px;height:22px;background:linear-gradient(#fdfdfd,#f4f4f4 55%,#e9e9e9);"></div>
<div class="a" style="left:686px;top:571px;width:599px;height:1px;background:#b5b5b5;"></div>
<div class="a" style="left:731px;top:549px;width:1px;height:22px;background:#c3c3c3;"></div>
<div class="a" style="left:862px;top:549px;width:1px;height:22px;background:#c3c3c3;"></div>
<div class="a" style="left:993px;top:549px;width:1px;height:22px;background:#c3c3c3;"></div>
<div class="a" style="left:1136px;top:549px;width:1px;height:22px;background:#c3c3c3;"></div>
<div class="a" style="left:1262px;top:549px;width:1px;height:22px;background:#c3c3c3;"></div>
<div class="a" style="left:695px;top:553px;width:13px;height:13px;background:#fafafa;border:1px solid #b5b5b5;"></div>
<svg class="a" style="left:697.5px;top:556.3px;" width="8" height="7" viewBox="0 0 8 7"><path d="M0.8 3.2L3 5.6L7.2 0.8" fill="none" stroke="#b9b9b9" stroke-width="1.8"/></svg>
<svg class="a" style="left:717.6px;top:556.4px;" width="7.2" height="3.6" viewBox="0 0 7.2 3.6"><path d="M0 0H7.2L3.6 3.6Z" fill="#111"/></svg>
<span class="t" style="left:737.50px;top:552px;font-size:12px;line-height:16px;color:#222;letter-spacing:-0.375px;font-weight:700;">Объект</span>
<span class="t" style="left:868.20px;top:552px;font-size:12px;line-height:16px;color:#222;letter-spacing:-0.260px;font-weight:700;">Угроза</span>
<span class="t" style="left:999.30px;top:552px;font-size:12px;line-height:16px;color:#222;font-weight:700;">Действие</span>
<span class="t" style="left:1142.50px;top:552px;font-size:12px;line-height:16px;color:#222;font-weight:700;transform:scaleX(0.8993);transform-origin:0 0;">Путь</span>
<div class="a" style="left:686px;top:572px;width:598px;height:23px;background:#f4f4f4;"></div>
<div class="a" style="left:686px;top:618px;width:598px;height:23px;background:#f4f4f4;"></div>
<div class="a" style="left:686px;top:657px;width:600px;height:53px;background:#4ba524;border-top:1px solid #3f8f22;"></div>
<span class="t" style="left:706.50px;top:671px;font-size:20px;line-height:24px;color:#efffe6;letter-spacing:0.166px;font-weight:700;">www.drweb.com</span>
<div class="a" style="left:0px;top:1010px;width:1680px;height:40px;background:linear-gradient(to right,#23404f 0,#22404f 48%,#213d51 57%,#1d3553 65%,#1c3058 73%,#1b2b55 81%,#1a2850 100%);"></div>
<svg class="a" style="left:15.5px;top:1022px;" width="17" height="16.5" viewBox="0 0 17 16.5"><g fill="#fff"><polygon points="0,2.4 7.2,1.4 7.2,7.8 0,7.8"/><polygon points="8.2,1.25 17,0 17,7.8 8.2,7.8"/><polygon points="0,8.8 7.2,8.8 7.2,15.2 0,14.2"/><polygon points="8.2,8.8 17,8.8 17,16.5 8.2,15.3"/></g></svg>
<div class="a" style="left:48px;top:1010px;width:344px;height:40px;background:#f3f3f3;border-top:1px solid #dcdcdc;"></div>
<svg class="a" style="left:60px;top:1022.3px;" width="16.5" height="16" viewBox="0 0 16.5 16"><circle cx="10.3" cy="6" r="5.2" fill="none" stroke="#222" stroke-width="1.4"/><path d="M6.6 9.8L0.6 15.6" stroke="#222" stroke-width="1.5"/></svg>
<span class="t" style="left:88.80px;top:1021px;font-size:15px;line-height:19px;color:#3c3c3c;letter-spacing:-0.016px;">Чтобы начать поиск, введите здесь запрос</span>
<svg class="a" style="left:407.5px;top:1021.6px;" width="17" height="16" viewBox="0 0 17 16"><g fill="none" stroke="#fff" stroke-width="1.2"><path d="M0.6 2.6V0.8H11.6V2.6M0.6 13.4V15.2H11.6V13.4"/><rect x="1.4" y="4.6" width="9.4" height="6.8"/></g>
<g fill="#fff"><rect x="14" y="0.2" width="1.6" height="3"/><rect x="13.4" y="4.4" width="3" height="2.8"/><rect x="14" y="8.6" width="1.6" height="7.2"/></g></svg>
<svg class="a" style="left:454.5px;top:1017.7px;" width="25" height="25" viewBox="0 0 48 48"><defs>
<linearGradient id="g27" x1="0.1" y1="0.2" x2="1" y2="0.5"><stop offset="0" stop-color="#35c1f1"/><stop offset="0.55" stop-color="#34c6c4"/><stop offset="1" stop-color="#6bdf4a"/></linearGradient>
<linearGradient id="g28" x1="0" y1="0" x2="0.6" y2="1"><stop offset="0" stop-color="#2a9be6"/><stop offset="1" stop-color="#0f5db8"/></linearGradient>
<linearGradient id="g29" x1="0" y1="0" x2="1" y2="1"><stop offset="0" stop-color="#1b4f9e"/><stop offset="1" stop-color="#0c4c9a"/></linearGradient>
</defs>
<path d="M24 0.5C38 0.5 48 10.5 47.6 22.5C47.4 29.5 42 34.5 35.5 34.5C29 34.5 26 31.5 27.4 28.4C28.6 25.8 30 24.6 29.4 21C28.6 16.6 24.6 13.6 19.6 13.8C11 14.2 3.6 20 1 27.4C-1.6 13 8.6 0.5 24 0.5Z" fill="url(#g27)"/>
<path d="M1 27.4C0.2 17.6 8 11.6 17.4 11.8C24.4 12 29.4 16 29.6 21.4C26.6 18 21.4 18 17.6 21.8C12.6 26.8 13.2 37.8 24.6 47.4C11.6 48 2.2 39 1 27.4Z" fill="url(#g28)"/>
<path d="M17.6 21.8C14.4 27 15.8 34.4 22.6 38.8C29.8 43.4 39.6 41.6 44.6 34.8C43.6 40.6 35 48.4 24.6 47.4C10.6 40.6 11 26 17.6 21.8Z" fill="url(#g29)"/></svg>
<svg class="a" style="left:504.5px;top:1020.4px;" width="22.5" height="19" viewBox="0 0 22.5 19"><path d="M0.5 1.2H8L9.6 3H22V18.4H0.5Z" fill="#e3a92e"/>
<path d="M0.5 4.2H22V18.4H0.5Z" fill="#f8cd55"/><path d="M0.5 4.2H22V6.2H0.5Z" fill="#fbdc7c"/>
<path d="M4.2 18.4V11.2H18.2V18.4H14.6V14.4H7.8V18.4Z" fill="#3f8fd9"/><path d="M4.2 11.2H18.2V12.6H4.2Z" fill="#5ba6e6"/></svg>
<div class="a" style="left:496px;top:1048px;width:40px;height:2px;background:#76b9ed;"></div>
<svg class="a" style="left:552.5px;top:1017.6px;" width="24" height="23.6" viewBox="0 0 24 23.6"><path d="M7.8 6.6V5.2C7.8 2.8 9.6 0.8 12 0.8C14.4 0.8 16.2 2.8 16.2 5.2V6.6" fill="none" stroke="#fff" stroke-width="1.4"/>
<path d="M0.3 6.4H23.7V21.6C23.7 22.6 22.9 23.4 21.9 23.4H2.1C1.1 23.4 0.3 22.6 0.3 21.6Z" fill="#fff"/>
<rect x="6.2" y="9.8" width="5.1" height="5.1" fill="#f25022"/><rect x="12.4" y="9.8" width="5.1" height="5.1" fill="#7fba00"/>
<rect x="6.2" y="16" width="5.1" height="5.1" fill="#00a4ef"/><rect x="12.4" y="16" width="5.1" height="5.1" fill="#ffb900"/></svg>
<div class="a" style="left:590px;top:1010px;width:48px;height:40px;background:#4b6877;"></div>
<div class="a" style="left:590px;top:1048px;width:48px;height:2px;background:#76b9ed;"></div>
<svg class="a" style="left:601px;top:1017.8px;" width="25.16" height="23.68" viewBox="0 0 17 16"><defs><radialGradient id="g30" cx="0.42" cy="0.3" r="0.8"><stop offset="0" stop-color="#b4f53e"/><stop offset="0.55" stop-color="#72d01c"/><stop offset="1" stop-color="#36a012"/></radialGradient></defs>
<path d="M7 0.2L12.8 1.9C13.9 6.4 13.2 11 7 14.7C0.8 11 0.1 6.4 1.2 1.9Z" fill="url(#g30)" stroke="#3f9a16" stroke-width="0.5" stroke-linejoin="round"/>
<g stroke="#1f6f12" stroke-width="0.9" fill="none" stroke-linecap="round"><path d="M2.6 4.2L5.4 6.2M2.2 8.4L5.2 8M3.6 11.6L5.8 9.8M9.6 2.6L7.8 5.2M4.6 2.6L6.2 5.2M11.6 4.6L9 6.2"/></g>
<circle cx="6.8" cy="7.2" r="1.7" fill="#2a8014" opacity="0.8"/>
<circle cx="9.8" cy="8.6" r="3.3" fill="#dff3fb" stroke="#a9c9d6" stroke-width="1"/>
<circle cx="9.3" cy="8" r="1.7" fill="#fff" opacity="0.85"/>
<path d="M12.4 11.2L15.9 14.7" stroke="#c3ccd4" stroke-width="1.6" stroke-linecap="round"/></svg>
<svg class="a" style="left:1328.5px;top:1017.8px;" width="26" height="20" viewBox="0 0 26 20"><defs><linearGradient id="g31" x1="0" y1="0" x2="0" y2="1"><stop offset="0" stop-color="#f4f6ff"/><stop offset="1" stop-color="#b9c4ef"/></linearGradient></defs>
<path d="M5.6 19.6C2.4 19.6 0.4 17.6 0.4 15.2C0.4 12.8 2.4 11 4.8 11.2C5.2 7.6 8 5.2 11.4 5.2C14.6 5.2 17 7.2 17.8 10C21.4 9.8 24.2 11.8 24.2 14.8C24.2 17.6 22 19.6 19.2 19.6Z" fill="url(#g31)"/>
<circle cx="18.6" cy="5.6" r="5.4" fill="#d9362b"/>
<text x="18.6" y="8.6" font-family="Liberation Sans" font-size="8.4" fill="#fff" text-anchor="middle">1</text></svg>
<span class="t" style="left:1361.00px;top:1021px;font-size:14px;line-height:18px;color:#fff;transform:scaleX(0.8942);transform-origin:0 0;">8°C</span>
<span class="t" style="left:1391.00px;top:1020px;font-size:15px;line-height:19px;color:#fff;transform:scaleX(0.9210);transform-origin:0 0;">Cloudy</span>
<svg class="a" style="left:1459px;top:1026.6px;" width="12.5" height="7.4" viewBox="0 0 12.5 7.4"><path d="M0.6 6.800000000000001L6.25 0.8L11.9 6.800000000000001" fill="none" stroke="#fff" stroke-width="1.3"/></svg>
<svg class="a" style="left:1480.8px;top:1023.6px;" width="16.4" height="13.4" viewBox="0 0 16.4 13.4"><g fill="none" stroke="#fff" stroke-width="1.1"><rect x="3.6" y="0.6" width="12.2" height="8.4"/><path d="M9.6 9V12.4M5.6 12.6H13.6"/><rect x="0.6" y="0.6" width="4.2" height="4.2" fill="#1c3050"/></g><rect x="2" y="2" width="1.4" height="1.4" fill="#fff"/><path d="M2.7 4.8V9.4H5" fill="none" stroke="#fff" stroke-width="1"/></svg>
<svg class="a" style="left:1504.6px;top:1022.6px;" width="17" height="15" viewBox="0 0 17 15"><path d="M0.6 5H3.4L7.2 1.2V13.8L3.4 10H0.6Z" fill="none" stroke="#fff" stroke-width="1.1" stroke-linejoin="round"/>
<path d="M9.6 5.2C10.6 6.6 10.6 8.4 9.6 9.8" fill="none" stroke="#fff" stroke-width="1.1"/>
<path d="M11.8 3.2C13.6 5.8 13.6 9.2 11.8 11.8" fill="none" stroke="#fff" stroke-opacity="0.55" stroke-width="1.1"/>
<path d="M14 1.4C16.6 5.2 16.6 9.8 14 13.6" fill="none" stroke="#fff" stroke-opacity="0.35" stroke-width="1.1"/></svg>
<span class="t" style="left:1531.00px;top:1022px;font-size:12px;line-height:16px;color:#fff;transform:scaleX(0.8615);transform-origin:0 0;">ENG</span>
<span class="t" style="left:1583.00px;top:1013px;font-size:12px;line-height:16px;color:#fff;transform:scaleX(0.8568);transform-origin:0 0;">8:21</span>
<span class="t" style="left:1567.00px;top:1031px;font-size:12px;line-height:16px;color:#fff;transform:scaleX(0.9097);transform-origin:0 0;">20.11.2024</span>
<svg class="a" style="left:1639px;top:1022.4px;" width="16.6" height="15.4" viewBox="0 0 16.6 15.4"><path d="M0.6 0.6H16V11.4H11.2L8.3 14.4L5.4 11.4H0.6Z" fill="none" stroke="#fff" stroke-width="1.2" stroke-linejoin="miter"/></svg>
<div class="a" style="left:1675px;top:1010px;width:1px;height:40px;background:rgba(255,255,255,.35);"></div>

</div>
</body></html>
